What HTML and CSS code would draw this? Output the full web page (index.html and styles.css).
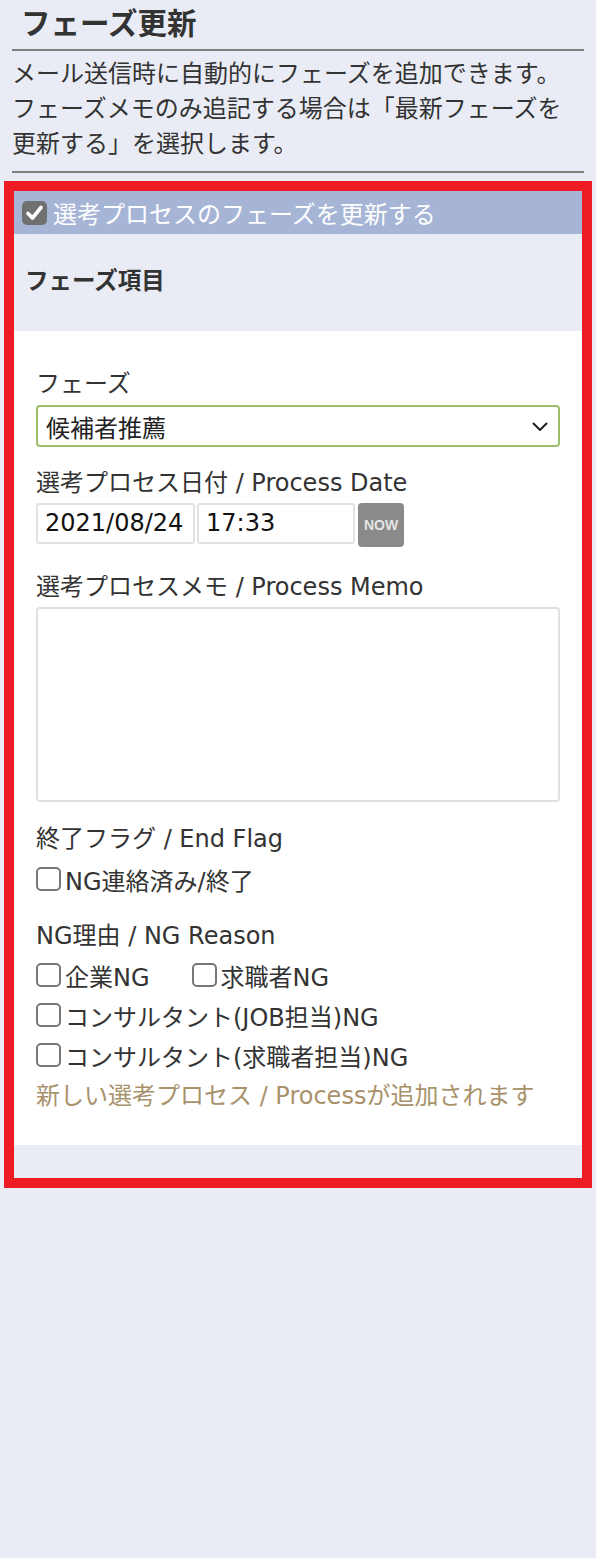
FILE: index.html
```html
<!DOCTYPE html>
<html lang="ja">

<head>
    <meta charset="UTF-8">
    <meta name="viewport" content="width=device-width, initial-scale=1.0">
    <title>フェーズ更新</title>
    <link rel="stylesheet" href="styles.css">
</head>

<body>
    <main class="page">
        <h1 class="title">フェーズ更新</h1>
        <p class="desc">メール送信時に自動的にフェーズを追加できます。<br>フェーズメモのみ追記する場合は「最新フェーズを<br>更新する」を選択します。</p>

        <section class="box">
            <div class="box-head">
                <span class="check check-on">
                    <svg viewBox="0 0 25 24" width="25" height="24"><path d="M6 12.5 L10.5 17 L19 6.5" fill="none" stroke="#fff" stroke-width="3.6" stroke-linecap="round" stroke-linejoin="round"/></svg>
                </span>
                <span>選考プロセスのフェーズを更新する</span>
            </div>
            <div class="box-sub">フェーズ項目</div>

            <div class="panel">
                <label class="label">フェーズ</label>
                <div class="select">
                    <span>候補者推薦</span>
                    <svg viewBox="0 0 16 9" width="16" height="9"><polyline points="1,1 8,8 15,1" fill="none" stroke="#222" stroke-width="2"/></svg>
                </div>

                <label class="label label-date">選考プロセス日付 / Process Date</label>
                <div class="date-row">
                    <div class="field field-date">2021/08/24</div>
                    <div class="field field-time">17:33</div>
                    <button class="now">NOW</button>
                </div>

                <label class="label label-memo">選考プロセスメモ / Process Memo</label>
                <div class="memo"></div>

                <label class="label label-gap">終了フラグ / End Flag</label>
                <div class="opt-row">
                    <span class="opt"><span class="check"></span>NG連絡済み/終了</span>
                </div>

                <label class="label label-gap">NG理由 / NG Reason</label>
                <div class="opt-row opt-first">
                    <span class="opt opt-wide"><span class="check"></span>企業NG</span>
                    <span class="opt"><span class="check"></span>求職者NG</span>
                </div>
                <div class="opt-row">
                    <span class="opt"><span class="check"></span>コンサルタント(JOB担当)NG</span>
                </div>
                <div class="opt-row">
                    <span class="opt"><span class="check"></span>コンサルタント(求職者担当)NG</span>
                </div>

                <p class="note">新しい選考プロセス / Processが追加されます</p>
            </div>
            <div class="box-foot"></div>
        </section>
    </main>
</body>

</html>
```

FILE: styles.css
```css
body {
    background-color: rgb(233, 236, 244);
    color: rgb(51, 51, 51);
    font-family: "DejaVu Sans", "Noto Sans CJK JP", sans-serif;
    font-size: 24px;
    margin: 0;
    padding: 0;
}

.page {
    padding: 0 12px;
}

.title {
    border-bottom: 2px solid rgb(128, 128, 128);
    box-sizing: border-box;
    font-size: 29.5px;
    font-weight: bold;
    height: 51px;
    line-height: 49px;
    margin: 0;
    padding: 0 9px;
}

.desc {
    border-bottom: 2px solid rgb(128, 128, 128);
    line-height: 35px;
    margin: 0;
    padding: 6px 0 9px;
}

.box {
    border: 10px solid rgb(237, 28, 36);
    margin: 8px -8px 0;
}

.box-head {
    align-items: center;
    background-color: rgb(166, 181, 214);
    color: rgb(255, 255, 255);
    display: flex;
    gap: 6px;
    height: 43px;
    padding: 0 8px;
}

.box-sub {
    box-sizing: border-box;
    font-size: 23.5px;
    font-weight: bold;
    height: 97px;
    line-height: 94px;
    padding: 0 11px;
}

.box-foot {
    height: 33px;
}

.panel {
    background-color: rgb(255, 255, 255);
    display: flex;
    flex-direction: column;
    padding: 36px 22px 32px;
}

.label {
    display: block;
    line-height: 34px;
}

.label-date {
    margin-top: 19px;
}

.label-memo {
    margin-top: 23px;
}

.label-gap {
    margin-top: 20px;
}

.select {
    align-items: center;
    border: 2px solid rgb(157, 189, 107);
    border-radius: 4px;
    box-sizing: border-box;
    color: rgb(34, 34, 34);
    display: flex;
    height: 42px;
    justify-content: space-between;
    margin-top: 4px;
    padding: 0 10px 0 8px;
}

.date-row {
    align-items: flex-start;
    display: flex;
    gap: 2px;
    margin-top: 3px;
}

.field {
    border: 2px solid rgb(226, 226, 226);
    border-radius: 3px;
    box-sizing: border-box;
    color: rgb(17, 17, 17);
    height: 41px;
    line-height: 37px;
    padding: 0 6px 0 7px;
    white-space: nowrap;
}

.field-date {
    width: 159px;
}

.field-time {
    width: 158px;
}

.now {
    background-color: rgb(138, 138, 138);
    border: none;
    border-radius: 4px;
    color: rgb(228, 228, 228);
    font-family: "Liberation Sans", sans-serif;
    font-size: 14px;
    font-weight: bold;
    height: 44px;
    margin-left: 1px;
    padding: 0;
    width: 46px;
}

.memo {
    border: 2px solid rgb(224, 224, 224);
    border-radius: 4px;
    box-sizing: border-box;
    height: 195px;
    margin-top: 3px;
}

.opt-row {
    align-items: center;
    display: flex;
    height: 40px;
    margin-top: 3px;
}

.opt-first {
    margin-top: 2px;
}

.opt-first ~ .opt-row {
    margin-top: 0;
}

.opt {
    align-items: center;
    display: flex;
    gap: 4px;
    white-space: nowrap;
}

.opt-wide {
    margin-right: 42px;
}

.check {
    border: 2px solid rgb(119, 119, 119);
    border-radius: 5px;
    box-sizing: border-box;
    display: inline-block;
    flex-shrink: 0;
    height: 24px;
    width: 25px;
}

.check-on {
    align-items: center;
    background-color: rgb(112, 112, 112);
    border: none;
    display: flex;
    justify-content: center;
}

.note {
    color: rgb(168, 146, 108);
    line-height: 34px;
    margin: 4px 0 0;
}
```
